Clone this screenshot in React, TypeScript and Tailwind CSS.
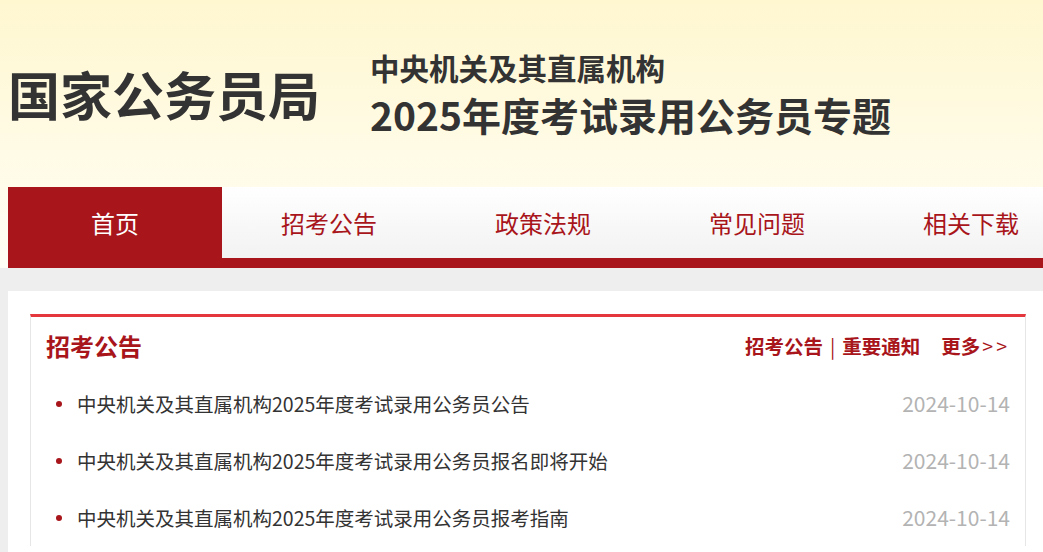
import React from "react";

const tabs = ["首页", "招考公告", "政策法规", "常见问题", "相关下载"];

const items = [
  { title: "中央机关及其直属机构2025年度考试录用公务员公告", date: "2024-10-14" },
  { title: "中央机关及其直属机构2025年度考试录用公务员报名即将开始", date: "2024-10-14" },
  { title: "中央机关及其直属机构2025年度考试录用公务员报考指南", date: "2024-10-14" },
];

export default function App() {
  return (
    <div
      className="w-full min-h-screen overflow-hidden bg-[#eeeeee] text-[#333]"
      style={{ fontFamily: '"Noto Sans CJK SC", "Noto Sans", sans-serif' }}
    >
      {/* header */}
      <div className="bg-gradient-to-b from-[#fff7d0] to-[#fffef6]">
        <div className="h-[187px] flex items-center pl-[8px]">
          <div className="w-[362px] shrink-0 text-[52px] font-bold leading-none text-[#333] whitespace-nowrap">
            国家公务员局
          </div>
          <div className="flex flex-col whitespace-nowrap">
            <div className="text-[29.5px] font-bold leading-[40px] text-[#333]">中央机关及其直属机构</div>
            <div className="text-[39px] font-bold leading-[52px] mt-[1px] text-[#333]">2025年度考试录用公务员专题</div>
          </div>
        </div>

        {/* nav */}
        <div className="pl-[8px]">
          <div className="flex bg-[#a8151b] pb-[10px] overflow-hidden">
            {tabs.map((t, i) => (
              <div
                key={t}
                className={
                  i === 0
                    ? "w-[214px] h-[71px] shrink-0 flex items-center justify-center text-[24px] text-white"
                    : "w-[214px] h-[71px] shrink-0 flex items-center justify-center text-[24px] text-[#a8151b] bg-gradient-to-b from-white to-[#f2f2f2]"
                }
              >
                {t}
              </div>
            ))}
          </div>
        </div>
      </div>

      {/* content */}
      <div className="pt-[23px] pl-[8px]">
        <div className="bg-white pt-[23px] pl-[22px] pr-[17px] min-h-[300px]">
          <div className="border-t-[3px] border-t-[#e4373d] border-x border-x-[#e6e6e6]">
            <div className="h-[58px] flex items-center justify-between pl-[15px] pr-[15px]">
              <div className="text-[24px] font-bold text-[#a8151b]">招考公告</div>
              <div className="flex items-center text-[19.5px] font-bold text-[#a8151b] whitespace-nowrap">
                <span>招考公告</span>
                <span className="mx-[7px] font-normal">|</span>
                <span>重要通知</span>
                <span className="ml-[21px]">更多</span>
                <span className="ml-[2px] tracking-[3px] font-normal">&gt;&gt;</span>
              </div>
            </div>
            <ul>
              {items.map((it) => (
                <li key={it.title} className="h-[57px] flex items-center pl-[25px] pr-[15px]">
                  <span className="w-[6px] h-[6px] rounded-full bg-[#a8151b] shrink-0" />
                  <span className="ml-[15px] text-[19.5px] text-[#333] flex-1 whitespace-nowrap">{it.title}</span>
                  <span className="text-[21px] text-[#b3b3b3]">{it.date}</span>
                </li>
              ))}
            </ul>
          </div>
        </div>
      </div>
    </div>
  );
}
